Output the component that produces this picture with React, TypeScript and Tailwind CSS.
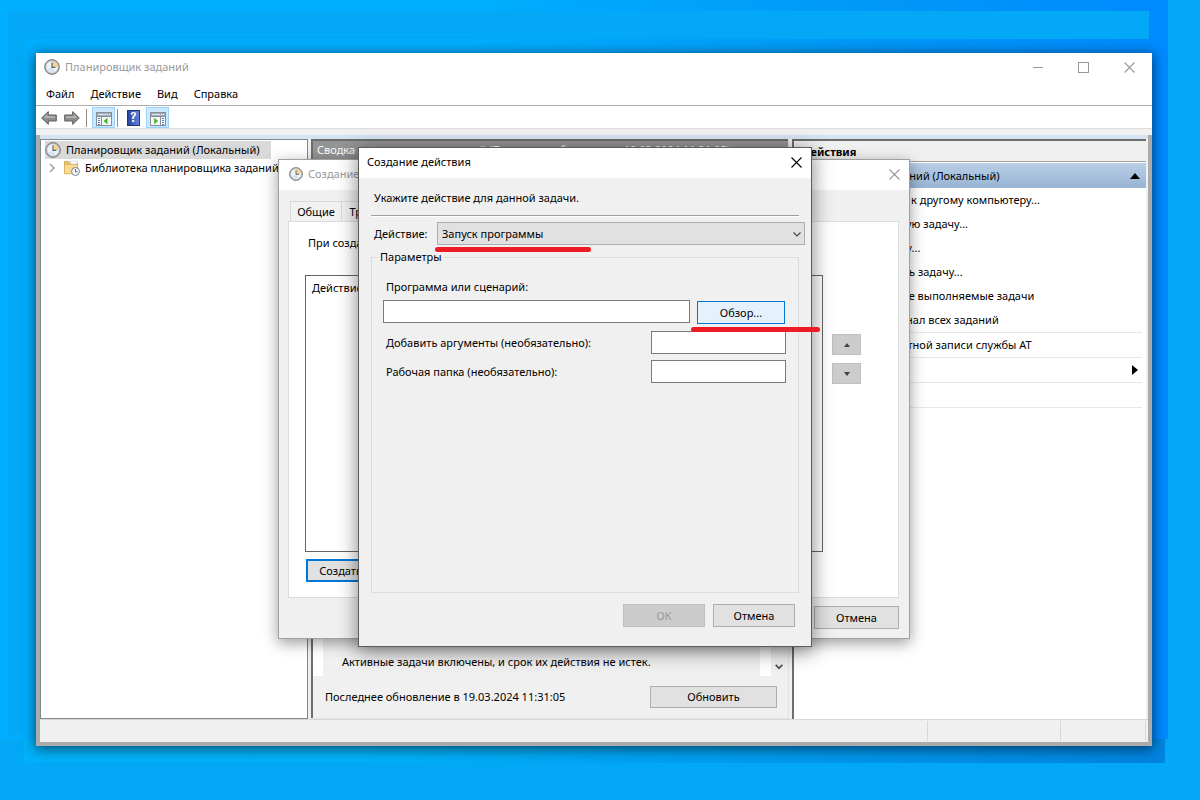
import type { ReactNode } from 'react';

function ClockIcon({ className }: { className: string }) {
  return (
    <svg viewBox="0 0 16 16" className={className} aria-hidden="true">
      <circle cx="8" cy="8" r="7.4" fill="#a9abad" stroke="#77797c" strokeWidth="0.9" />
      <circle cx="8" cy="8" r="5.9" fill="#eef3f8" stroke="#d3d6d9" strokeWidth="0.8" />
      <path d="M8 8V2.2A5.8 5.8 0 0 1 13.8 8Z" fill="#f3d58d" />
      <path d="M3.4 10.5A5.3 5.3 0 0 0 11 12.4L8 8.6Z" fill="#d5e4f1" />
      <path d="M8 3.6V8.4H11.4" fill="none" stroke="#4f6373" strokeWidth="1.1" />
    </svg>
  );
}

function FolderClockIcon() {
  return (
    <svg viewBox="0 0 16 16" className="size-4 shrink-0" aria-hidden="true">
      <path d="M0.5 1.5H5L6.2 2.8H13.5V13.5H0.5Z" fill="#e8c26a" stroke="#c99f45" strokeWidth="0.7" />
      <path d="M6.5 1H13V4H6.5Z" fill="#fdfdfd" stroke="#b9c4cc" strokeWidth="0.5" />
      <path d="M0.5 4.5H13.6V13.8H0.5Z" fill="#f8dc94" stroke="#d5ad55" strokeWidth="0.7" />
      <circle cx="11.5" cy="11.5" r="4" fill="#f2f6f9" stroke="#7d858c" strokeWidth="1" />
      <path d="M11.5 9V11.8H13.6" fill="none" stroke="#3f5566" strokeWidth="0.9" />
    </svg>
  );
}

function ArrowIcon({ flip }: { flip?: boolean }) {
  return (
    <svg viewBox="0 0 16 16" className={flip ? 'size-4 -scale-x-100' : 'size-4'} aria-hidden="true">
      <path d="M0.7 8L7.3 1.6V5H15.3V11H7.3V14.4Z" fill="#8d8d8d" stroke="#5e5e5e" strokeWidth="1" strokeLinejoin="round" />
      <path d="M2.6 8L6.4 4.3V6.2H14V8Z" fill="#b4b4b4" />
    </svg>
  );
}

function PaneIcon({ right }: { right?: boolean }) {
  return (
    <svg viewBox="0 0 16 14" className="h-3.5 w-4" aria-hidden="true">
      <rect x="0.5" y="0.5" width="15" height="13" fill="#f6f7f8" stroke="#858d97" />
      <rect x="1" y="1" width="14" height="3" fill="#a3adb9" />
      <path d="M2 2.5H10" stroke="#dfe5ec" />
      <path d="M11 2.5H12M13 2.5H14" stroke="#fff" />
      <path d="M1 4.5H15" stroke="#858d97" />
      {right ? (
        <>
          <path d="M10.5 5V13" stroke="#858d97" />
          <path d="M12 6.5H14M12 8.5H14M12 10.5H14M12 12.5H14" stroke="#5c86b8" />
          <path d="M4.4 6.2L7.8 9L4.4 11.8Z" fill="#3fbf2a" stroke="#2a9a1c" strokeWidth="0.4" />
        </>
      ) : (
        <>
          <path d="M5.5 5V13" stroke="#858d97" />
          <path d="M2 6.5H4M2 8.5H4M2 10.5H4M2 12.5H4" stroke="#5c86b8" />
          <path d="M11.2 6.2L7.8 9L11.2 11.8Z" fill="#3fbf2a" stroke="#2a9a1c" strokeWidth="0.4" />
        </>
      )}
    </svg>
  );
}

function CloseIcon() {
  return (
    <svg viewBox="0 0 11 11" className="size-[11px]" aria-hidden="true">
      <path d="M0.5 0.5L10.5 10.5M10.5 0.5L0.5 10.5" fill="none" stroke="currentColor" strokeWidth="1.1" />
    </svg>
  );
}

function PushButton({ children, className }: { children: ReactNode; className: string }) {
  return (
    <button type="button" className={`flex items-center justify-center border border-[#adadad] bg-[#e1e1e1] ${className}`}>
      {children}
    </button>
  );
}

const actions = [
  'Подключиться к другому компьютеру...',
  'Создать простую задачу...',
  'Создать задачу...',
  'Импортировать задачу...',
  'Отображать все выполняемые задачи',
  'Включить журнал всех заданий',
];

const moreActions = ['Настройка учетной записи службы AT', 'Вид', 'Обновить'];

function ActionsPane() {
  return (
    <aside className="flex min-w-0 flex-1 flex-col border-t-2 border-l-2 border-[#6d6d6d] bg-white">
      <h2 className="flex h-[21px] items-center border-b border-[#a0a0a0] bg-[#f0f0f0] px-2 pt-0.5 font-bold">Действия</h2>
      <button type="button" className="mt-px flex h-[25px] items-center justify-between bg-linear-to-b from-[#b9cfe7] to-[#98b4d4] pr-1.5 pl-3">
        Планировщик заданий (Локальный)
        <svg viewBox="0 0 10 6" className="h-1.5 w-2.5" aria-hidden="true">
          <path d="M0 6L5 0L10 6Z" />
        </svg>
      </button>
      <ul className="mr-1">
        {actions.map((label) => (
          <li key={label}>
            <button type="button" className="flex h-6 w-full items-center pl-9">{label}</button>
          </li>
        ))}
        {moreActions.map((label) => (
          <li key={label}>
            <button type="button" className="flex h-[25px] w-full items-center justify-between border-t border-[#e8e8e8] pr-1 pl-9">
              {label}
              {label === 'Вид' && (
                <svg viewBox="0 0 6 10" className="h-2.5 w-1.5" aria-hidden="true">
                  <path d="M0 0L6 5L0 10Z" />
                </svg>
              )}
            </button>
          </li>
        ))}
        <li className="border-t border-[#e8e8e8]" />
      </ul>
    </aside>
  );
}

function SummaryPane() {
  return (
    <section className="flex w-[478px] shrink-0 flex-col border-r border-b border-r-[#e3e3e3] border-b-[#e3e3e3]">
      <div className="flex min-h-0 flex-1 flex-col border-t-2 border-l-2 border-[#6d6d6d]">
        <h2 className="flex h-[18px] shrink-0 items-center bg-[#949494] px-1 text-white">
          <span className="truncate">Сводка планировщика заданий (Последнее обновление: 19.03.2024 11:31:05)</span>
        </h2>
        <div className="flex flex-1">
          <div className="w-2.5 bg-white" />
          <div className="flex flex-1 items-end pb-1.5 pl-[19px]">Активные задачи включены, и срок их действия не истек.</div>
          <div className="w-[11px] bg-white" />
          <div className="flex w-[17px] items-end pb-1.5 pl-1">
            <svg viewBox="0 0 8 6" className="h-1.5 w-2" aria-hidden="true">
              <path d="M0.7 0.8L4 4.3L7.3 0.8" fill="none" stroke="#505050" strokeWidth="1.8" />
            </svg>
          </div>
        </div>
        <div className="flex h-[42px] shrink-0 items-center justify-between pr-[11px] pl-3">
          <p>Последнее обновление в 19.03.2024 11:31:05</p>
          <PushButton className="h-[22px] w-[127px]">Обновить</PushButton>
        </div>
      </div>
    </section>
  );
}

function TreePane() {
  return (
    <nav className="w-[268px] shrink-0 overflow-hidden border border-[#828790] bg-white px-1 pt-px" aria-label="Дерево">
      <a href="#root-node" className="flex h-[18px] w-[226px] items-center gap-[5px] bg-[#d9d9d9] whitespace-nowrap">
        <ClockIcon className="size-4 shrink-0" />
        Планировщик заданий (Локальный)
      </a>
      <a href="#library" className="flex h-[18px] items-center gap-[5px] pl-1 whitespace-nowrap">
        <svg viewBox="0 0 6 10" className="mr-1 h-2.5 w-1.5 shrink-0" aria-hidden="true">
          <path d="M1 1L5 5L1 9" fill="none" stroke="#a0a0a0" strokeWidth="1.5" />
        </svg>
        <FolderClockIcon />
        Библиотека планировщика заданий
      </a>
    </nav>
  );
}

function MainWindow() {
  return (
    <div className="relative flex flex-1 flex-col bg-white shadow-[0_2px_12px_1px_rgba(0,0,0,0.55)]">
      <header className="flex h-[30px] items-center justify-between pr-[17px] pb-0.5 pl-2 text-[#999]">
        <div className="flex items-center gap-[5px]">
          <ClockIcon className="size-4" />
          <h1>Планировщик заданий</h1>
        </div>
        <div className="flex items-center gap-[35px]">
          <button type="button" aria-label="Свернуть" className="h-px w-2.5 bg-[#999]" />
          <button type="button" aria-label="Развернуть" className="size-[11px] border border-[#999]" />
          <button type="button" aria-label="Закрыть"><CloseIcon /></button>
        </div>
      </header>
      <nav className="flex h-[22px] items-center gap-4 px-2.5" aria-label="Меню">
        <button type="button">Файл</button>
        <button type="button">Действие</button>
        <button type="button">Вид</button>
        <button type="button">Справка</button>
      </nav>
      <div className="flex h-6 items-center border-y border-t-[#adadad] border-b-[#dcdcdc] px-[5px] pt-px">
        <button type="button" aria-label="Назад"><ArrowIcon /></button>
        <button type="button" aria-label="Вперед" className="ml-[7px]"><ArrowIcon flip /></button>
        <span className="ml-1.5 h-[18px] w-px bg-[#8d8d8d]" />
        <button type="button" aria-label="Дерево консоли" className="ml-[5px] flex h-[21px] w-[23px] items-end justify-center border border-[#99d1ff] bg-[#cce8ff] pb-px">
          <PaneIcon />
        </button>
        <span className="ml-0.5 h-[18px] w-px bg-[#8d8d8d]" />
        <button type="button" aria-label="Справка" className="ml-[9px] flex h-4 w-[13px] items-center justify-center border border-[#20357e] bg-linear-to-r from-[#2c449c] to-[#5f83dc] font-serif text-[14px] font-bold text-white">
          ?
        </button>
        <button type="button" aria-label="Панель действий" className="ml-1.5 flex h-[21px] w-[23px] items-end justify-center border border-[#99d1ff] bg-[#cce8ff] pb-px">
          <PaneIcon right />
        </button>
      </div>
      <div className="h-1.5 bg-[#f0f0f0]" />
      <div className="flex flex-1 flex-col border-x-4 border-b-4 border-[#ababab] bg-[#f0f0f0]">
        <div className="h-1 bg-[#d6e3f1]" />
        <div className="flex flex-1 gap-[3px] pr-0.5">
          <TreePane />
          <SummaryPane />
          <ActionsPane />
        </div>
        <footer className="flex h-[23px] justify-end border-t border-[#d7d7d7] py-px pr-0.5">
          <span className="w-[133px] border-l border-[#d7d7d7]" />
          <span className="w-[86px] border-x border-[#d7d7d7]" />
        </footer>
      </div>
    </div>
  );
}

function TaskDialog() {
  return (
    <section className="absolute top-[159px] left-[278px] flex w-[632px] flex-col border border-[#a0a0a0] bg-[#f0f0f0] shadow-[0_4px_14px_rgba(0,0,0,0.4)]">
      <header className="flex h-[30px] items-center justify-between bg-white pr-[9px] pb-0.5 pl-2.5 text-[#999]">
        <div className="flex items-center gap-[5px]">
          <ClockIcon className="size-3.5" />
          <h2>Создание задачи</h2>
        </div>
        <button type="button" aria-label="Закрыть"><CloseIcon /></button>
      </header>
      <div className="flex flex-col pt-[11px] pr-2.5 pb-[9px] pl-[9px]">
        <div className="ml-0.5 flex h-5">
          <button type="button" className="w-[52px] border border-b-0 border-[#d9d9d9] bg-[#f2f2f2]">Общие</button>
          <button type="button" className="w-[66px] border-t border-r border-[#d9d9d9] bg-[#f2f2f2]">Триггеры</button>
        </div>
        <div className="border border-[#dcdcdc] bg-white pt-[13px] pr-9 pb-[15px] pl-4">
          <p className="ml-[3px]">При создании задачи необходимо указать действие, которое произойдет при ее запуске.</p>
          <div className="mt-6 flex gap-[9px]">
            <div className="h-[277px] w-[518px] shrink-0 border border-[#646464] px-1.5 pt-1">Действие</div>
            <div className="flex flex-col gap-2 pt-[59px]">
              <button type="button" aria-label="Вверх" className="flex h-[21px] w-[29px] items-center justify-center border border-[#bfbfbf] bg-[#ccc]">
                <svg viewBox="0 0 6 4" className="h-1 w-1.5" aria-hidden="true"><path d="M0 4L3 0L6 4Z" fill="#444" /></svg>
              </button>
              <button type="button" aria-label="Вниз" className="flex h-[21px] w-[29px] items-center justify-center border border-[#bfbfbf] bg-[#ccc]">
                <svg viewBox="0 0 6 4" className="h-1 w-1.5" aria-hidden="true"><path d="M0 0L3 4L6 0Z" fill="#444" /></svg>
              </button>
            </div>
          </div>
          <button type="button" className="mt-[7px] ml-px h-[23px] w-[78px] border-2 border-[#0078d7] bg-[#e1e1e1]">Создать...</button>
        </div>
        <div className="mt-2 flex justify-end">
          <PushButton className="h-[23px] w-[85px]">Отмена</PushButton>
        </div>
      </div>
    </section>
  );
}

function ActionDialog() {
  return (
    <section className="absolute top-[147px] left-[358px] flex w-[454px] flex-col border border-[#5c5c5c] bg-[#f0f0f0] shadow-[0_4px_18px_1px_rgba(0,0,0,0.45)]">
      <header className="flex h-[30px] items-center justify-between bg-white pr-[9px] pb-0.5 pl-2">
        <h2>Создание действия</h2>
        <button type="button" aria-label="Закрыть"><CloseIcon /></button>
      </header>
      <div className="flex flex-col pt-3 pr-3 pb-[19px] pl-3">
        <p className="ml-[3px]">Укажите действие для данной задачи.</p>
        <div className="mt-[9px] h-0.5 border-t border-b border-t-[#a0a0a0] border-b-white" />
        <div className="-mr-1.5 ml-[3px] flex items-center pt-[5px]">
          <label htmlFor="action-type" className="w-[63px]">Действие:</label>
          <div className="relative flex-1">
            <select id="action-type" className="h-[23px] w-full appearance-none border border-[#adadad] bg-[#e1e1e1] px-1 leading-4">
              <option>Запуск программы</option>
            </select>
            <svg viewBox="0 0 8 5" className="pointer-events-none absolute top-[10px] right-1 h-[5px] w-2" aria-hidden="true">
              <path d="M0.5 0.5L4 4L7.5 0.5" fill="none" stroke="#444" strokeWidth="1.1" />
            </svg>
            <span className="absolute top-[25px] -left-0.5 h-[5px] w-[156px] rounded-full bg-[#ed1c24]" />
          </div>
        </div>
        <fieldset className="mt-1 h-[344px] min-w-0 border border-[#dcdcdc] pr-3 pl-[11px]">
          <legend className="-ml-[5px] px-0.5 leading-4">Параметры</legend>
          <label htmlFor="program" className="mt-3.5 ml-[3px] block leading-4">Программа или сценарий:</label>
          <div className="mt-[5px] mr-px flex gap-[7px]">
            <input id="program" type="text" className="h-[23px] min-w-0 flex-1 border border-[#7a7a7a] bg-white px-1" />
            <div className="relative pt-px">
              <button type="button" className="h-[23px] w-[88px] border border-[#0078d7] bg-[#e5f1fb]">Обзор...</button>
              <span className="absolute top-[27px] -left-1.5 z-10 h-[5px] w-[129px] rounded-full bg-[#ed1c24]" />
            </div>
          </div>
          <div className="mt-[7px] flex flex-col gap-1.5">
            <div className="ml-[3px] flex items-center justify-between">
              <label htmlFor="arguments">Добавить аргументы (необязательно):</label>
              <input id="arguments" type="text" className="h-[23px] w-[135px] border border-[#7a7a7a] bg-white px-1" />
            </div>
            <div className="ml-[3px] flex items-center justify-between">
              <label htmlFor="folder">Рабочая папка (необязательно):</label>
              <input id="folder" type="text" className="h-[23px] w-[135px] border border-[#7a7a7a] bg-white px-1" />
            </div>
          </div>
        </fieldset>
        <div className="mt-[11px] mr-1 flex justify-end gap-2">
          <button type="button" disabled className="h-[23px] w-[82px] border border-[#bfbfbf] bg-[#ccc] text-[#9a9a9a]">ОК</button>
          <PushButton className="h-[23px] w-[82px]">Отмена</PushButton>
        </div>
      </div>
    </section>
  );
}

export default function App() {
  return (
    <main className="relative flex min-h-screen flex-col overflow-hidden bg-[#03a9f6] px-9 pt-[53px] pb-[54px] pr-12 font-['Noto_Sans',sans-serif] text-[11px] leading-4 text-black">
      <div className="absolute top-0 right-8 bottom-[61px] left-0 bg-linear-to-r from-[#00aeff] from-40% via-[#0098f8] via-75% to-[#008aff]" />
      <div className="absolute right-0 bottom-0 left-0 h-[61px] bg-[#03a9f6]" />
      <div className="absolute top-[11px] right-[51px] left-6 h-7 bg-[#03a9f6]" />
      <div className="absolute top-[11px] bottom-[65px] left-2 w-4 bg-[#03a9f6]" />
      <div className="absolute right-[35px] bottom-[37px] left-6 h-6 bg-linear-to-r from-[#00b2fa] from-30% to-[#0084e0]" />
      <MainWindow />
      <TaskDialog />
      <ActionDialog />
    </main>
  );
}
